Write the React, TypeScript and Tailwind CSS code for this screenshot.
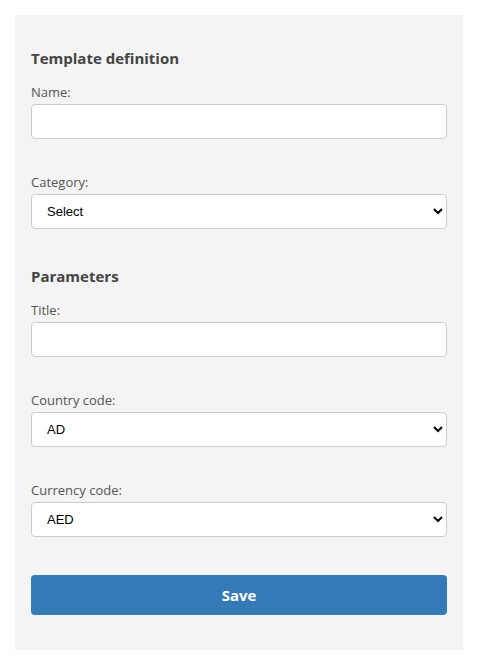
import React, { useState } from 'react';

const COUNTRIES = ['AD', 'AE', 'AF', 'AG', 'AL', 'AM'];
const CURRENCIES = ['AED', 'AFN', 'ALL', 'AMD', 'ANG', 'AOA'];

function Label({ children }: { children: React.ReactNode }) {
    return <label className="block text-[13px] leading-[18px] text-[#555] mb-[3px]">{children}</label>;
}

export default function App() {
    const [name, setName] = useState('');
    const [title, setTitle] = useState('');
    const [category, setCategory] = useState('');
    const [country, setCountry] = useState('AD');
    const [currency, setCurrency] = useState('AED');

    const inputCls = 'block w-full h-[35px] bg-white border border-[#ccc] rounded-[4px] px-3 outline-none';
    const selectCls = 'block w-full h-[35px] bg-white border border-[#ccc] rounded-[4px] pl-[11px] pr-2 text-[13px] text-black outline-none';

    return (
        <div className="min-h-screen bg-white p-[15px] font-['Open_Sans',sans-serif]">
            <div className="w-[448px] bg-[#f4f4f4] px-4 pt-[33px] pb-[35px]">
                <h2 className="text-[15px] leading-5 font-bold text-[#444] mb-[15px]">Template definition</h2>

                <div className="mb-[34px]">
                    <Label>Name:</Label>
                    <input className={inputCls} value={name} onChange={(e) => setName(e.target.value)} />
                </div>

                <div className="mb-[37px]">
                    <Label>Category:</Label>
                    <select
                        className={selectCls + " font-['Liberation_Sans',Arial,sans-serif]"}
                        value={category}
                        onChange={(e) => setCategory(e.target.value)}
                    >
                        <option value="">Select</option>
                        <option value="a">General</option>
                    </select>
                </div>

                <h2 className="text-[15px] leading-5 font-bold text-[#444] mb-[15px]">Parameters</h2>

                <div className="mb-[34px]">
                    <Label>Title:</Label>
                    <input className={inputCls} value={title} onChange={(e) => setTitle(e.target.value)} />
                </div>

                <div className="mb-[34px]">
                    <Label>Country code:</Label>
                    <select
                        className={selectCls + " font-['Liberation_Sans',Arial,sans-serif]"}
                        value={country}
                        onChange={(e) => setCountry(e.target.value)}
                    >
                        {COUNTRIES.map((c) => (
                            <option key={c} value={c}>{c}</option>
                        ))}
                    </select>
                </div>

                <div className="mb-[38px]">
                    <Label>Currency code:</Label>
                    <select
                        className={selectCls + " font-['Liberation_Sans',Arial,sans-serif]"}
                        value={currency}
                        onChange={(e) => setCurrency(e.target.value)}
                    >
                        {CURRENCIES.map((c) => (
                            <option key={c} value={c}>{c}</option>
                        ))}
                    </select>
                </div>

                <button className="block w-full h-10 bg-[#337ab7] rounded-[4px] text-white text-[15px] font-bold">
                    Save
                </button>
            </div>
        </div>
    );
}
